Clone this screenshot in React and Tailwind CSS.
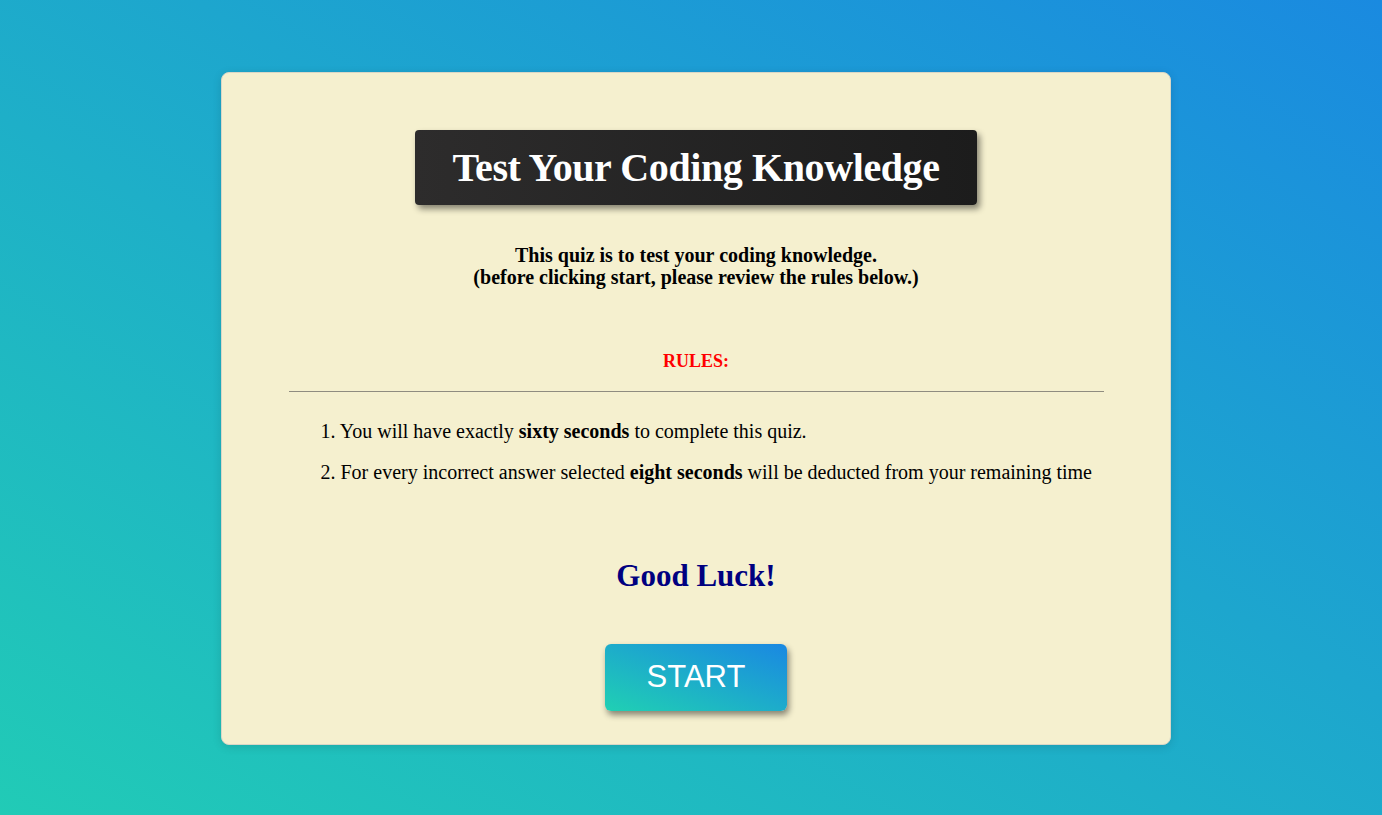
import React from 'react';

const serif = "font-['Liberation_Serif','Times_New_Roman',serif]";

const rules = [
  { before: 'You will have exactly ', strong: 'sixty seconds', after: ' to complete this quiz.' },
  { before: 'For every incorrect answer selected ', strong: 'eight seconds', after: ' will be deducted from your remaining time' },
];

export default function App() {
  return (
    <div className="min-h-screen w-full flex items-center justify-center bg-[linear-gradient(to_top_right,#21cbb6,#1a8ae0)]">
      <div className={`ml-[10px] mt-[2px] w-[950px] h-[673px] bg-[#f5f0cf] rounded-lg border border-[#d9d6c6] shadow-[0_2px_10px_rgba(0,0,0,0.12)] flex flex-col items-center pt-[57px] ${serif}`}>
        <div className="w-[562px] h-[75px] rounded bg-linear-to-r from-[#2d2c2c] to-[#1c1c1c] shadow-[3px_4px_6px_rgba(0,0,0,0.45)] flex items-center justify-center">
          <h1 className="text-white font-bold text-[40px] tracking-[-0.4px] leading-none">Test Your Coding Knowledge</h1>
        </div>

        <p className="mt-[39px] text-center font-bold text-[20px] leading-[22px] text-black">
          This quiz is to test your coding knowledge.
          <br />
          (before clicking start, please review the rules below.)
        </p>

        <h2 className="mt-[63px] text-[#ff0000] font-bold text-[18px] leading-[20px]">RULES:</h2>

        <div className="mt-[20px] w-[815px] h-px bg-[#8f8c80]" />

        <ol className="w-[815px] pl-[32px] mt-[28px] text-[20px] leading-[22px] text-black">
          {rules.map((r, i) => (
            <li key={i} className="mb-[19px]">
              {i + 1}. {r.before}
              <b>{r.strong}</b>
              {r.after}
            </li>
          ))}
        </ol>

        <h3 className="mt-[58px] text-[#000080] font-bold text-[31px] leading-none">Good Luck!</h3>

        <button className="mt-[53px] w-[182px] h-[67px] rounded-md bg-[linear-gradient(to_top_right,#20d0b3,#1a88e2)] shadow-[2px_4px_6px_rgba(0,0,0,0.45)] text-white text-[31px] font-['Liberation_Sans',Arial,sans-serif]">
          START
        </button>
      </div>
    </div>
  );
}
